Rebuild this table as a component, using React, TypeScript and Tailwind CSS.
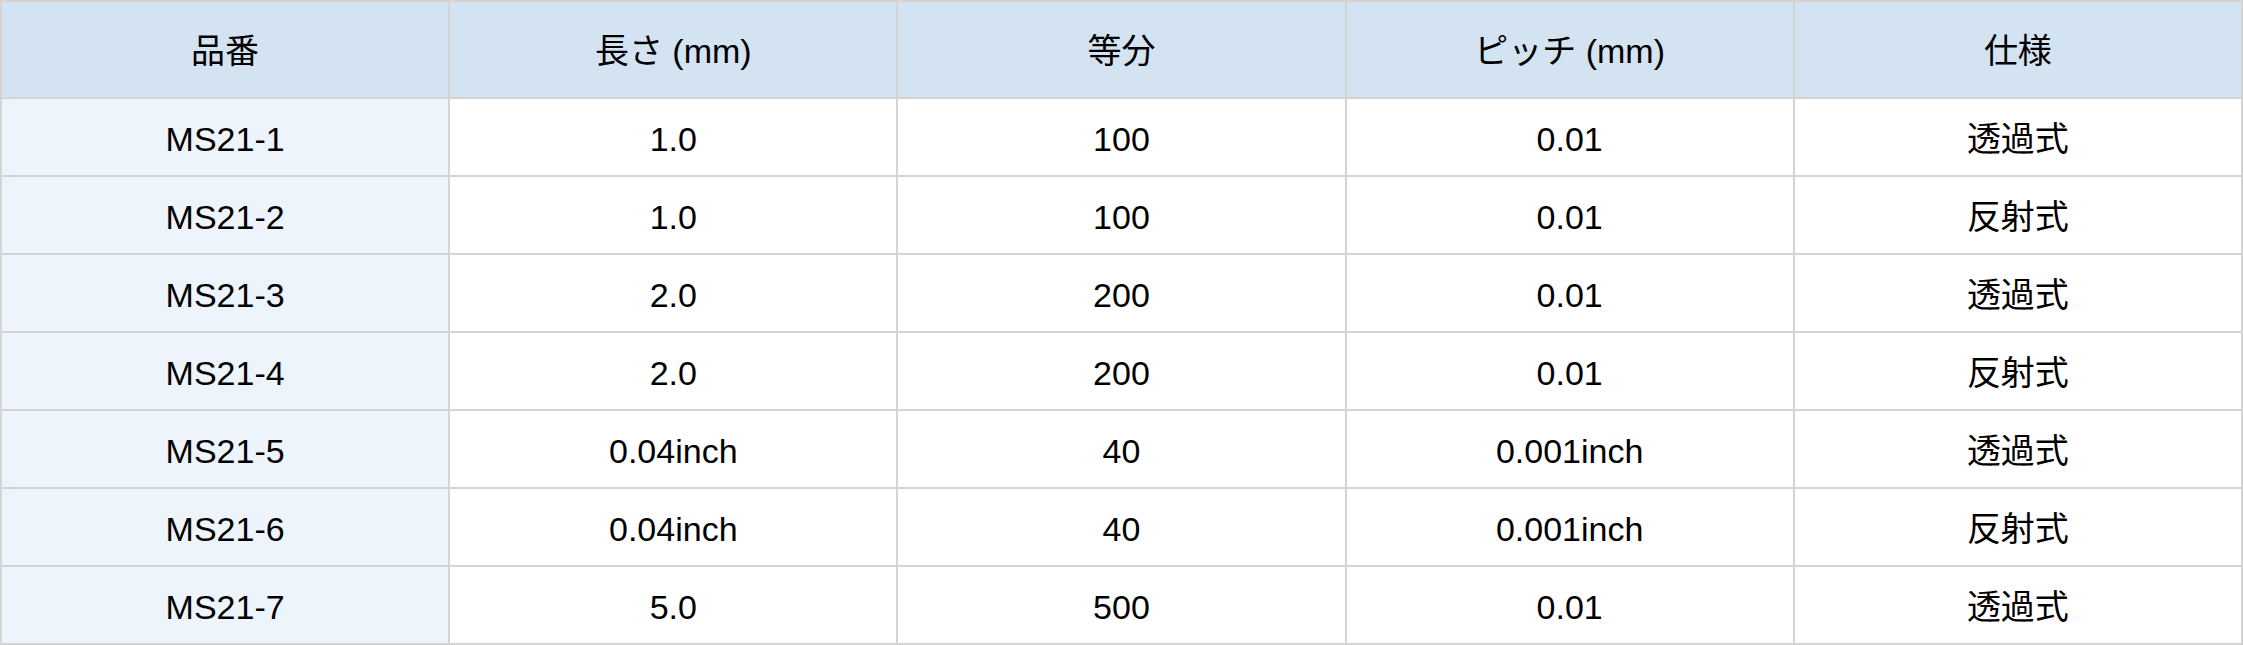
const headers = ["品番", "長さ (mm)", "等分", "ピッチ (mm)", "仕様"];

const rows: string[][] = [
  ["MS21-1", "1.0", "100", "0.01", "透過式"],
  ["MS21-2", "1.0", "100", "0.01", "反射式"],
  ["MS21-3", "2.0", "200", "0.01", "透過式"],
  ["MS21-4", "2.0", "200", "0.01", "反射式"],
  ["MS21-5", "0.04inch", "40", "0.001inch", "透過式"],
  ["MS21-6", "0.04inch", "40", "0.001inch", "反射式"],
  ["MS21-7", "5.0", "500", "0.01", "透過式"],
];

export default function App() {
  return (
    <div
      className="w-[2243px] bg-white text-black"
      style={{ fontFamily: '"Liberation Sans", "Noto Sans CJK JP", sans-serif' }}
    >
      <table className="w-full table-fixed border-collapse border-2 border-[#d4d4d4] text-[34px]">
        <thead>
          <tr className="h-[97px] bg-[#d4e3f2]">
            {headers.map((h) => (
              <th
                key={h}
                className="border-2 border-[#d4d4d4] pt-1 text-center font-normal"
              >
                {h}
              </th>
            ))}
          </tr>
        </thead>
        <tbody>
          {rows.map((row) => (
            <tr key={row[0]} className="h-[78px]">
              {row.map((cell, i) => (
                <td
                  key={i}
                  className={
                    i === 0
                      ? "border-2 border-[#d4d4d4] bg-[#edf4fb] pt-1 text-center"
                      : "border-2 border-[#d4d4d4] pt-1 text-center"
                  }
                >
                  {cell}
                </td>
              ))}
            </tr>
          ))}
        </tbody>
      </table>
    </div>
  );
}
